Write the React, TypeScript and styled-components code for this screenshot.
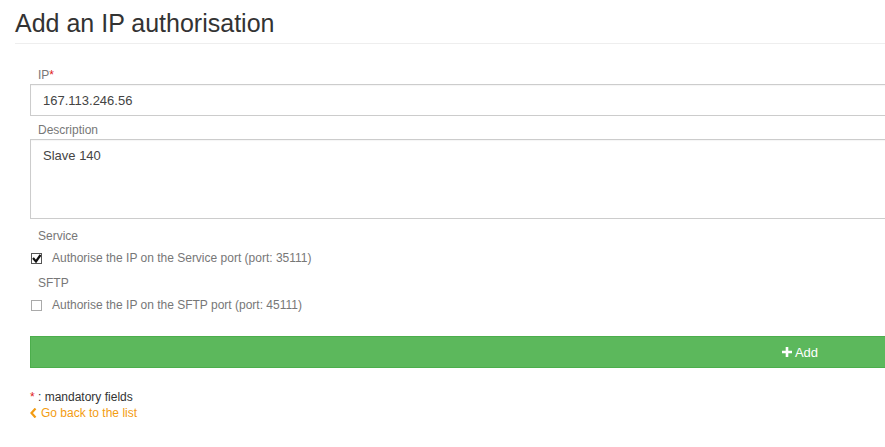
import React from 'react';
import styled, { createGlobalStyle } from 'styled-components';

const GlobalStyle = createGlobalStyle`
  html, body {
    margin: 0;
    padding: 0;
    overflow: hidden;
    background: #fff;
  }
  body {
    font-family: "Liberation Sans", Arial, sans-serif;
    color: #333;
  }
`;

const Viewport = styled.div`
  width: 100vw;
  height: 100vh;
  overflow: hidden;
`;

const Page = styled.div`
  width: 1600px;
  padding: 0 15px;
  box-sizing: border-box;
`;

const Title = styled.h1`
  margin: 0;
  padding: 9px 0 5px;
  font-size: 25px;
  line-height: 29px;
  font-weight: 400;
  color: #333;
  border-bottom: 1px solid #eee;
`;

const Form = styled.form`
  margin: 24px 15px 0;
  display: flex;
  flex-direction: column;
`;

const Label = styled.label`
  display: block;
  font-size: 12px;
  line-height: 14px;
  color: #777;
  padding-left: 8px;
  margin-bottom: 2px;
`;

const Required = styled.span`
  color: #e02020;
`;

const Field = styled.div<{ $gap: number }>`
  margin-bottom: ${p => p.$gap}px;
`;

const TextInput = styled.input`
  display: block;
  width: 100%;
  box-sizing: border-box;
  height: 32px;
  padding: 0 12px;
  border: 1px solid #ccc;
  border-radius: 0;
  font-family: inherit;
  font-size: 13px;
  color: #444;
  box-shadow: inset 0 1px 1px rgba(0, 0, 0, 0.04);
`;

const TextArea = styled.textarea`
  display: block;
  width: 100%;
  box-sizing: border-box;
  height: 80px;
  padding: 8px 12px;
  border: 1px solid #ccc;
  border-radius: 0;
  font-family: inherit;
  font-size: 13px;
  color: #444;
  resize: none;
  box-shadow: inset 0 1px 1px rgba(0, 0, 0, 0.04);
`;

const CheckRow = styled.label`
  display: flex;
  align-items: center;
  gap: 10px;
  height: 16px;
  margin-top: 7px;
  font-size: 12px;
  color: #777;
  margin-left: 1px;
`;

const Box = styled.span<{ $checked?: boolean }>`
  width: 9px;
  height: 9px;
  border: 1px solid ${p => (p.$checked ? '#555' : '#aaa')};
  background: #fff;
  position: relative;
  display: inline-block;
  flex: none;
`;

const CheckMark = styled.svg`
  position: absolute;
  left: 0;
  top: 0;
`;

const SubmitButton = styled.button`
  margin-top: 13px;
  height: 32px;
  width: 100%;
  border: 1px solid #4cae4c;
  background: #5cb85c;
  color: #fff;
  font-family: inherit;
  font-size: 13px;
  display: flex;
  align-items: center;
  justify-content: center;
  gap: 3px;
`;

const Footer = styled.div`
  margin: 21px 15px 0;
  font-size: 12px;
  line-height: 16px;
`;

const BackLink = styled.a`
  color: #f39c12;
  text-decoration: none;
  display: inline-flex;
  align-items: center;
  gap: 4px;
`;

export default function App() {
  return (
    <Viewport>
      <GlobalStyle />
      <Page>
        <Title>Add an IP authorisation</Title>
        <Form onSubmit={e => e.preventDefault()}>
          <Field $gap={7}>
            <Label>IP<Required>*</Required></Label>
            <TextInput defaultValue="167.113.246.56" />
          </Field>
          <Field $gap={10}>
            <Label>Description</Label>
            <TextArea defaultValue="Slave 140" />
          </Field>
          <Field $gap={10}>
            <Label>Service</Label>
            <CheckRow>
              <Box $checked>
                <CheckMark width="9" height="9" viewBox="0 0 9 9">
                  <path d="M1 4 L4 7.5 L8.5 1" stroke="#111" strokeWidth="2.2" fill="none" />
                </CheckMark>
              </Box>
              Authorise the IP on the Service port (port: 35111)
            </CheckRow>
          </Field>
          <Field $gap={10}>
            <Label>SFTP</Label>
            <CheckRow>
              <Box />
              Authorise the IP on the SFTP port (port: 45111)
            </CheckRow>
          </Field>
          <SubmitButton type="submit">
            <svg width="10" height="10" viewBox="0 0 10 10">
              <path d="M3.7 0h2.6v3.7H10v2.6H6.3V10H3.7V6.3H0V3.7h3.7z" fill="#fff" />
            </svg>
            Add
          </SubmitButton>
        </Form>
        <Footer>
          <div><Required>*</Required> : mandatory fields</div>
          <BackLink href="#">
            <svg width="7" height="10" viewBox="0 0 7 10">
              <path d="M5.5 0.5 L1.5 5 L5.5 9.5" stroke="#f39c12" strokeWidth="2.2" fill="none" />
            </svg>
            Go back to the list
          </BackLink>
        </Footer>
      </Page>
    </Viewport>
  );
}
